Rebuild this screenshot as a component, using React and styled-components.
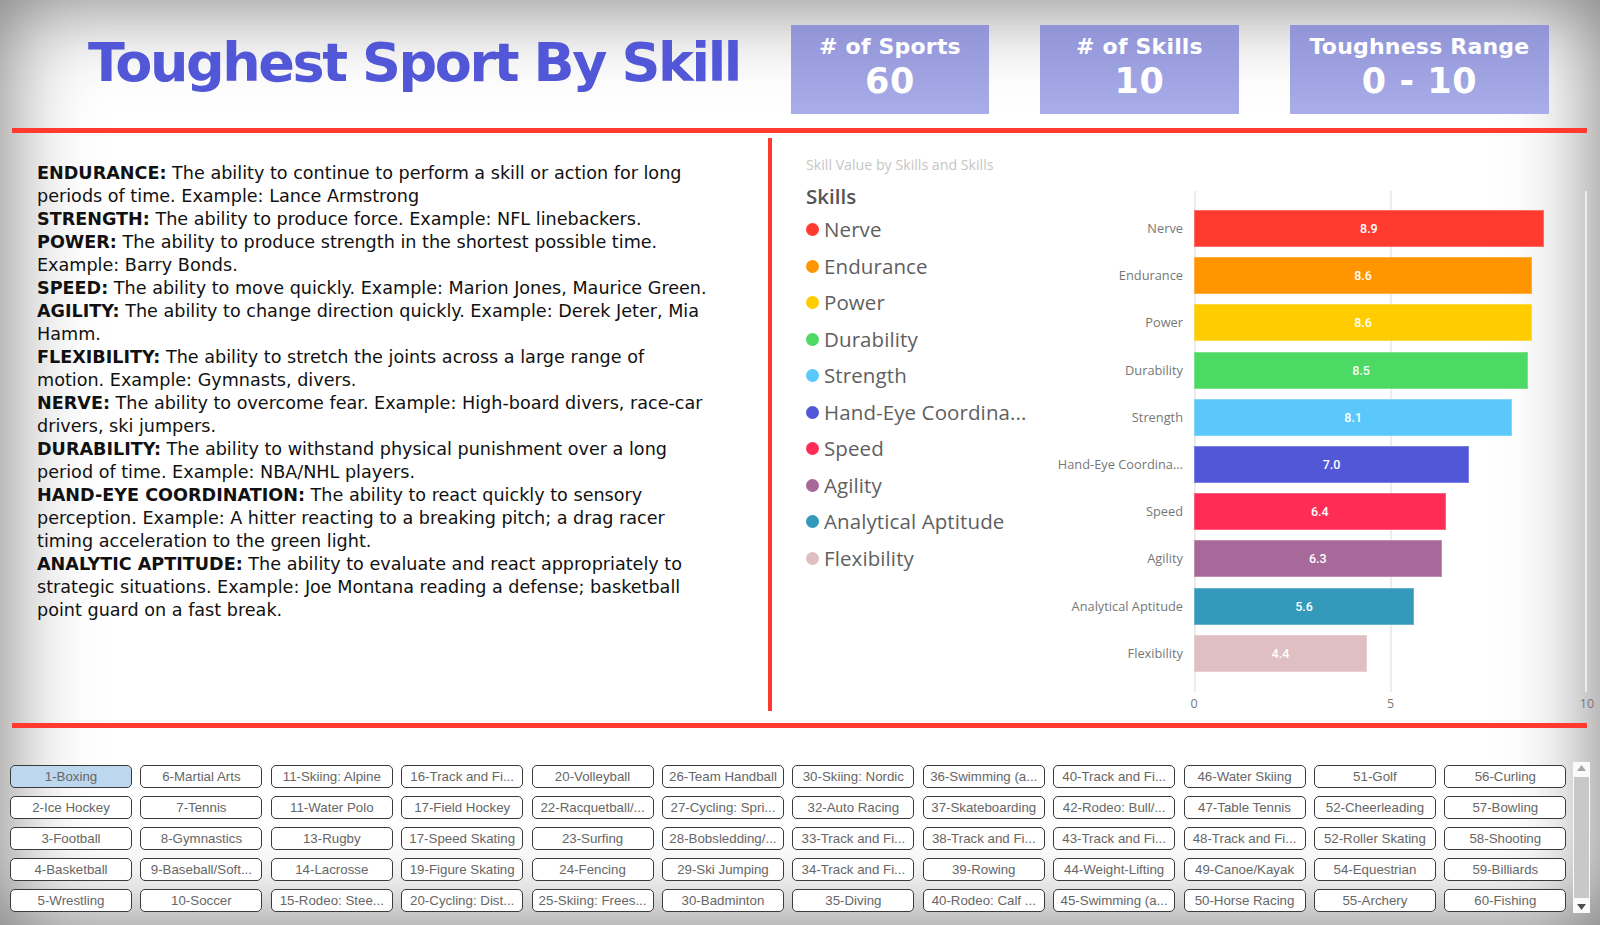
import React from 'react';
import styled, { createGlobalStyle } from 'styled-components';

const Global = createGlobalStyle`
  html, body { margin: 0; padding: 0; background: #fff; }
  #root { width: 1600px; height: 925px; }
  * { box-sizing: border-box; }
`;

const Page = styled.div`
  width: 1600px;
  height: 925px;
  overflow: hidden;
  background: #fff;
  box-shadow: inset 0 0 90px rgba(0, 0, 0, 0.55);
  display: flex;
  flex-direction: column;
`;

const Header = styled.header`
  height: 128px;
  display: flex;
  align-items: flex-start;
  padding-left: 88px;
`;

const Title = styled.h1`
  flex: 0 0 703px;
  margin: 36px 0 0;
  font-family: "DejaVu Sans", Verdana, sans-serif;
  font-weight: bold;
  font-size: 54px;
  line-height: 54px;
  letter-spacing: -2.4px;
  color: #5157d6;
  white-space: nowrap;
`;

const Cards = styled.div`
  display: flex;
  gap: 51px;
  margin-top: 25px;
`;

const Card = styled.div`
  width: ${(p) => p.$w}px;
  height: 89px;
  padding-top: 8px;
  background: linear-gradient(180deg, #9195d7 0%, #a9ade9 100%);
  display: flex;
  flex-direction: column;
  align-items: center;
  font-family: "DejaVu Sans", Verdana, sans-serif;
  font-weight: bold;
  color: #fff;
`;

const CardLabel = styled.div`
  font-size: 22px;
  line-height: 27px;
  letter-spacing: 0.2px;
  white-space: nowrap;
`;

const CardValue = styled.div`
  font-size: 35px;
  line-height: 40px;
  margin-top: 1px;
  letter-spacing: 0.6px;
  white-space: nowrap;
`;

const Rule = styled.div`
  height: 5px;
  margin: 0 13px 0 12px;
  background: #ff3b30;
  flex: none;
`;

const Main = styled.main`
  height: 590px;
  display: flex;
`;

const TextPanel = styled.section`
  width: 756px;
  margin-left: 12px;
  padding: 29px 0 0 25px;
`;

const Definitions = styled.div`
  width: 679px;
  font-family: "DejaVu Sans", Tahoma, sans-serif;
  font-size: 17.6px;
  line-height: 23px;
  color: #111;
`;

const Definition = styled.p`
  margin: 0;
`;

const Term = styled.b`
  font-weight: bold;
`;

const Divider = styled.div`
  width: 4px;
  margin: 5px 0 12px;
  background: #ff3b30;
`;

const ChartPanel = styled.section`
  flex: 1;
  display: flex;
`;

const LegendColumn = styled.div`
  width: 248px;
  padding: 22px 0 0 34px;
  font-family: "Open Sans", "Noto Sans", sans-serif;
`;

const ChartTitle = styled.div`
  font-size: 14.2px;
  line-height: 20px;
  color: #c6c6c6;
  white-space: nowrap;
`;

const LegendHeading = styled.div`
  margin-top: 7px;
  font-size: 20.5px;
  line-height: 28px;
  font-weight: 600;
  color: #555;
`;

const LegendList = styled.ul`
  list-style: none;
  margin: 1px 0 0;
  padding: 0;
`;

const LegendItem = styled.li`
  height: 36.5px;
  display: flex;
  align-items: center;
  gap: 5px;
  font-size: 20.5px;
  color: #5f5f5f;
  letter-spacing: 0.1px;
  white-space: nowrap;
`;

const Dot = styled.span`
  width: 13px;
  height: 13px;
  border-radius: 50%;
  background: ${(p) => p.$c};
  flex: none;
  margin-top: 1px;
`;

const Plot = styled.div`
  display: grid;
  grid-template-columns: 163px 393px;
  column-gap: 11px;
  padding-top: 58px;
  align-content: start;
  font-family: "Open Sans", "Noto Sans", sans-serif;
`;

const CategoryAxis = styled.div`
  display: flex;
  flex-direction: column;
  gap: 10.2px;
  padding: 19px 0 20px;
`;

const Category = styled.div`
  height: 37px;
  line-height: 37px;
  text-align: right;
  font-size: 12.8px;
  color: #777;
  white-space: nowrap;
`;

const Track = styled.div`
  display: flex;
  flex-direction: column;
  gap: 10.2px;
  padding: 19px 0 20px;
  background-image: linear-gradient(#ececec, #ececec), linear-gradient(#ececec, #ececec),
    linear-gradient(#ececec, #ececec);
  background-size: 2px 100%;
  background-position: 0 0, 50% 0, 100% 0;
  background-repeat: no-repeat;
`;

const Bar = styled.div`
  height: 37px;
  background: ${(p) => p.$c};
  box-shadow: inset 0 0 0 1px rgba(255, 255, 255, 0.25);
  display: flex;
  align-items: center;
  justify-content: center;
  font-family: Roboto, "Open Sans", sans-serif;
  font-weight: 500;
  font-size: 12.5px;
  color: #fff;
`;

const ValueAxis = styled.div`
  grid-column: 2;
  display: flex;
  justify-content: space-between;
  height: 24px;
  align-items: center;
`;

const Tick = styled.span`
  width: 0;
  display: flex;
  justify-content: center;
  font-size: 12.5px;
  color: #777;
`;

const SlicerArea = styled.section`
  flex: 1;
  display: flex;
  align-items: flex-start;
  padding: 37px 0 0 10px;
`;

const SlicerGrid = styled.div`
  display: grid;
  grid-template-columns: repeat(12, 122px);
  grid-template-rows: repeat(5, 23px);
  grid-auto-flow: column;
  column-gap: 8.4px;
  row-gap: 8px;
`;

const SlicerButton = styled.div`
  height: 23px;
  border: 1px solid #3a3a3a;
  border-radius: 5px;
  background: ${(p) => (p.$selected ? '#bdd7ee' : '#fff')};
  font-family: "Liberation Sans", Arial, sans-serif;
  font-size: 13.3px;
  line-height: 21px;
  color: #666;
  text-align: center;
  white-space: nowrap;
  overflow: hidden;
  padding: 0 3px;
`;

const Scrollbar = styled.div`
  width: 17px;
  height: 151px;
  margin: -3px 0 0 7px;
  background: #fafafa;
  display: flex;
  flex-direction: column;
  align-items: center;
  justify-content: space-between;
  padding: 3px 0;
`;

const Arrow = styled.svg`
  width: 9px;
  height: 6px;
  flex: none;
`;

const Thumb = styled.div`
  width: 15px;
  flex: 1;
  margin: 6px 0;
  background: #c8c8c8;
`;

const skills = [
  { name: 'Nerve', value: 8.9, color: '#ff3b30' },
  { name: 'Endurance', value: 8.6, color: '#ff9500' },
  { name: 'Power', value: 8.6, color: '#ffcc00' },
  { name: 'Durability', value: 8.5, color: '#4cd964' },
  { name: 'Strength', value: 8.1, color: '#5ac8fa' },
  { name: 'Hand-Eye Coordina...', value: 7.0, color: '#5157d6' },
  { name: 'Speed', value: 6.4, color: '#ff2d55' },
  { name: 'Agility', value: 6.3, color: '#a66999' },
  { name: 'Analytical Aptitude', value: 5.6, color: '#3499ba' },
  { name: 'Flexibility', value: 4.4, color: '#dfbfc2' },
];

const definitions = [
  ['ENDURANCE:', 'The ability to continue to perform a skill or action for long periods of time. Example: Lance Armstrong'],
  ['STRENGTH:', 'The ability to produce force. Example: NFL linebackers.'],
  ['POWER:', 'The ability to produce strength in the shortest possible time. Example: Barry Bonds.'],
  ['SPEED:', 'The ability to move quickly. Example: Marion Jones, Maurice Green.'],
  ['AGILITY:', 'The ability to change direction quickly. Example: Derek Jeter, Mia Hamm.'],
  ['FLEXIBILITY:', 'The ability to stretch the joints across a large range of motion. Example: Gymnasts, divers.'],
  ['NERVE:', 'The ability to overcome fear. Example: High-board divers, race-car drivers, ski jumpers.'],
  ['DURABILITY:', 'The ability to withstand physical punishment over a long period of time. Example: NBA/NHL players.'],
  ['HAND-EYE COORDINATION:', 'The ability to react quickly to sensory perception. Example: A hitter reacting to a breaking pitch; a drag racer timing acceleration to the green light.'],
  ['ANALYTIC APTITUDE:', 'The ability to evaluate and react appropriately to strategic situations. Example: Joe Montana reading a defense; basketball point guard on a fast break.'],
];

const sports = [
  '1-Boxing', '2-Ice Hockey', '3-Football', '4-Basketball', '5-Wrestling',
  '6-Martial Arts', '7-Tennis', '8-Gymnastics', '9-Baseball/Soft...', '10-Soccer',
  '11-Skiing: Alpine', '11-Water Polo', '13-Rugby', '14-Lacrosse', '15-Rodeo: Stee...',
  '16-Track and Fi...', '17-Field Hockey', '17-Speed Skating', '19-Figure Skating', '20-Cycling: Dist...',
  '20-Volleyball', '22-Racquetball/...', '23-Surfing', '24-Fencing', '25-Skiing: Frees...',
  '26-Team Handball', '27-Cycling: Spri...', '28-Bobsledding/...', '29-Ski Jumping', '30-Badminton',
  '30-Skiing: Nordic', '32-Auto Racing', '33-Track and Fi...', '34-Track and Fi...', '35-Diving',
  '36-Swimming (a...', '37-Skateboarding', '38-Track and Fi...', '39-Rowing', '40-Rodeo: Calf ...',
  '40-Track and Fi...', '42-Rodeo: Bull/...', '43-Track and Fi...', '44-Weight-Lifting', '45-Swimming (a...',
  '46-Water Skiing', '47-Table Tennis', '48-Track and Fi...', '49-Canoe/Kayak', '50-Horse Racing',
  '51-Golf', '52-Cheerleading', '52-Roller Skating', '54-Equestrian', '55-Archery',
  '56-Curling', '57-Bowling', '58-Shooting', '59-Billiards', '60-Fishing',
];

export default function App() {
  return (
    <>
      <Global />
      <Page>
        <Header>
          <Title>Toughest Sport By Skill</Title>
          <Cards>
            <Card $w={198}>
              <CardLabel># of Sports</CardLabel>
              <CardValue>60</CardValue>
            </Card>
            <Card $w={199}>
              <CardLabel># of Skills</CardLabel>
              <CardValue>10</CardValue>
            </Card>
            <Card $w={259}>
              <CardLabel>Toughness Range</CardLabel>
              <CardValue>0 - 10</CardValue>
            </Card>
          </Cards>
        </Header>
        <Rule />
        <Main>
          <TextPanel>
            <Definitions>
              {definitions.map(([term, text]) => (
                <Definition key={term}>
                  <Term>{term}</Term> {text}
                </Definition>
              ))}
            </Definitions>
          </TextPanel>
          <Divider />
          <ChartPanel>
            <LegendColumn>
              <ChartTitle>Skill Value by Skills and Skills</ChartTitle>
              <LegendHeading>Skills</LegendHeading>
              <LegendList>
                {skills.map((s) => (
                  <LegendItem key={s.name}>
                    <Dot $c={s.color} />
                    {s.name}
                  </LegendItem>
                ))}
              </LegendList>
            </LegendColumn>
            <Plot>
              <CategoryAxis>
                {skills.map((s) => (
                  <Category key={s.name}>{s.name}</Category>
                ))}
              </CategoryAxis>
              <Track>
                {skills.map((s) => (
                  <Bar key={s.name} $c={s.color} style={{ width: `${s.value * 10}%` }}>
                    {s.value.toFixed(1)}
                  </Bar>
                ))}
              </Track>
              <ValueAxis>
                <Tick>0</Tick>
                <Tick>5</Tick>
                <Tick>10</Tick>
              </ValueAxis>
            </Plot>
          </ChartPanel>
        </Main>
        <Rule />
        <SlicerArea>
          <SlicerGrid>
            {sports.map((s, i) => (
              <SlicerButton key={i} $selected={i === 0}>
                {s}
              </SlicerButton>
            ))}
          </SlicerGrid>
          <Scrollbar>
            <Arrow viewBox="0 0 9 6">
              <path d="M0 6 L4.5 0 L9 6 Z" fill="#a6a6a6" />
            </Arrow>
            <Thumb />
            <Arrow viewBox="0 0 9 6">
              <path d="M0 0 L4.5 6 L9 0 Z" fill="#505050" />
            </Arrow>
          </Scrollbar>
        </SlicerArea>
      </Page>
    </>
  );
}
